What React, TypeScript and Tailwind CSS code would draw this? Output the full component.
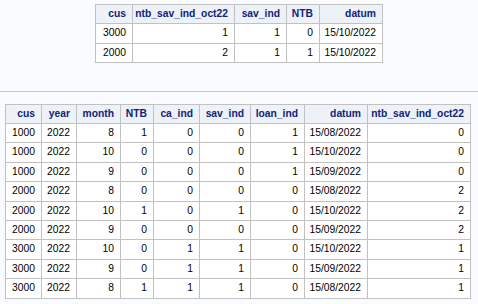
const topCols = [
  { key: "cus", w: "w-[37px]" },
  { key: "ntb_sav_ind_oct22", w: "w-[102px]" },
  { key: "sav_ind", w: "w-[52px]" },
  { key: "NTB", w: "w-[33px]" },
  { key: "datum", w: "w-[63px]" },
];

const topRows = [
  ["3000", "1", "1", "0", "15/10/2022"],
  ["2000", "2", "1", "1", "15/10/2022"],
];

const bottomCols = [
  { key: "cus", w: "w-[36px]" },
  { key: "year", w: "w-[35px]" },
  { key: "month", w: "w-[44px]" },
  { key: "NTB", w: "w-[33px]" },
  { key: "ca_ind", w: "w-[46px]" },
  { key: "sav_ind", w: "w-[51px]" },
  { key: "loan_ind", w: "w-[54px]" },
  { key: "datum", w: "w-[63px]" },
  { key: "ntb_sav_ind_oct22", w: "w-[103px]" },
];

const bottomRows = [
  ["1000", "2022", "8", "1", "0", "0", "1", "15/08/2022", "0"],
  ["1000", "2022", "10", "0", "0", "0", "1", "15/10/2022", "0"],
  ["1000", "2022", "9", "0", "0", "0", "1", "15/09/2022", "0"],
  ["2000", "2022", "8", "0", "0", "0", "0", "15/08/2022", "2"],
  ["2000", "2022", "10", "1", "0", "1", "0", "15/10/2022", "2"],
  ["2000", "2022", "9", "0", "0", "0", "0", "15/09/2022", "2"],
  ["3000", "2022", "10", "0", "1", "1", "0", "15/10/2022", "1"],
  ["3000", "2022", "9", "0", "1", "1", "0", "15/09/2022", "1"],
  ["3000", "2022", "8", "1", "1", "1", "0", "15/08/2022", "1"],
];

type Col = { key: string; w: string };

function DataTable({ cols, rows, rowH }: { cols: Col[]; rows: string[][]; rowH: string }) {
  return (
    <table className="border-separate border-spacing-0 border-l border-t border-[#c1c1c1] table-fixed">
      <thead>
        <tr className="h-[19px]">
          {cols.map((c) => (
            <th
              key={c.key}
              className={`${c.w} p-0 pr-[6px] text-right font-bold text-[#112277] bg-[#edf2f9] border-r border-b border-[#c1c1c1] whitespace-nowrap`}
            >
              {c.key}
            </th>
          ))}
        </tr>
      </thead>
      <tbody>
        {rows.map((r, i) => (
          <tr key={i} className={rowH}>
            {r.map((v, j) => (
              <td
                key={j}
                className="p-0 pr-[6px] text-right text-black bg-white border-r border-b border-[#c1c1c1] whitespace-nowrap"
              >
                {v}
              </td>
            ))}
          </tr>
        ))}
      </tbody>
    </table>
  );
}

export default function App() {
  return (
    <div className="w-[478px] h-[304px] bg-[#fafbfe] flex flex-col font-['Liberation_Sans',Arial,sans-serif] text-[10.3px] leading-none overflow-hidden">
      <div className="mt-[4px] flex justify-center">
        <DataTable cols={topCols} rows={topRows} rowH="h-[19.5px]" />
      </div>
      <div className="mt-[28px] h-px bg-[#c8c8c8]" />
      <div className="mt-[12px] ml-[5px]">
        <DataTable cols={bottomCols} rows={bottomRows} rowH="h-[19.4px]" />
      </div>
    </div>
  );
}
